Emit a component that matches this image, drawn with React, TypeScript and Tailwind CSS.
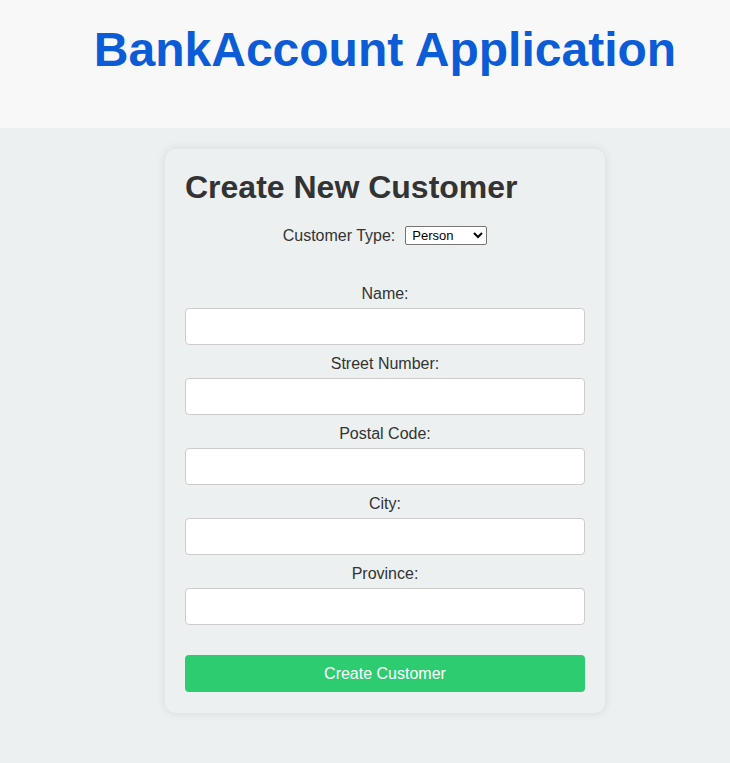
export default function App() {
  const fields = ["Name:", "Street Number:", "Postal Code:", "City:", "Province:"];

  return (
    <div className="min-h-screen bg-[#ecf0f1] font-['Liberation_Sans',Arial,sans-serif] text-[#333] pb-12">
      <header className="h-[128px] bg-[#f8f8f8] pl-10 pt-[22px] text-center">
        <h1 className="text-[48px] leading-[55px] font-bold text-[#0b5cd6]">BankAccount Application</h1>
      </header>

      <div className="pl-10">
        <div className="w-[440px] mx-auto mt-[21px] p-5 pb-[21px] rounded-[10px] bg-[#ecf0f1] shadow-[0_0_10px_rgba(0,0,0,0.1)]">
          <h2 className="text-[32px] leading-[37px] font-bold text-[#333]">Create New Customer</h2>

          <div className="mt-5 flex items-center justify-center h-[19px] text-[16px] leading-[18px]">
            <span className="mr-[10px]">Customer Type:</span>
            <select className="w-[82px] h-[19px] border border-[#767676] rounded-[2px] bg-white text-[13px] text-black pl-[2px]">
              <option>Person</option>
              <option>Company</option>
            </select>
          </div>

          <form className="mt-[39px] flex flex-col">
            {fields.map((f, i) => (
              <div key={f} className={i > 0 ? "mt-[9px]" : ""}>
                <label className="block text-center text-[16px] leading-[20px]">{f}</label>
                <input
                  type="text"
                  className="mt-[4px] block w-full h-[37px] bg-white border border-[#ccc] rounded-[4px] px-2"
                />
              </div>
            ))}
            <button
              type="button"
              className="mt-[30px] h-[37px] w-full rounded-[4px] bg-[#2ecc71] text-white text-[16px]"
            >
              Create Customer
            </button>
          </form>
        </div>
      </div>
    </div>
  );
}
